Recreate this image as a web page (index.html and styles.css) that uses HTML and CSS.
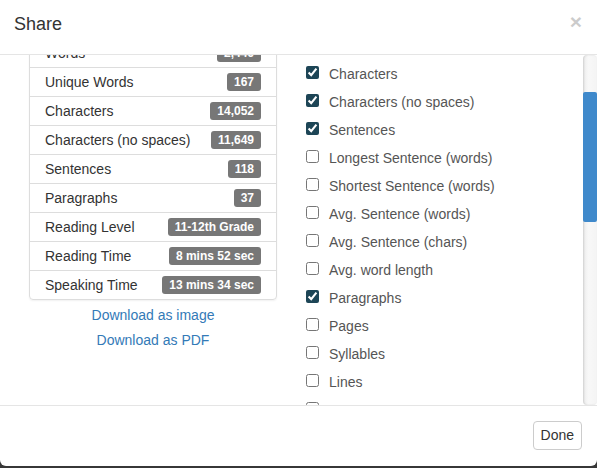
FILE: index.html
```html
<!DOCTYPE html>
<html>
<head>
<meta charset="utf-8">
<link rel="stylesheet" href="styles.css">
</head>
<body>
<div class="modal">
  <div class="modal-header">
    <h4 class="modal-title">Share</h4>
    <span class="close">×</span>
  </div>
  <div class="modal-body">
    <div class="viewport">
      <div class="row">
        <div class="col">
          <ul class="list-group">
            <li class="list-item"><span>Words</span><span class="badge">2,446</span></li>
            <li class="list-item"><span>Unique Words</span><span class="badge">167</span></li>
            <li class="list-item"><span>Characters</span><span class="badge">14,052</span></li>
            <li class="list-item"><span>Characters (no spaces)</span><span class="badge">11,649</span></li>
            <li class="list-item"><span>Sentences</span><span class="badge">118</span></li>
            <li class="list-item"><span>Paragraphs</span><span class="badge">37</span></li>
            <li class="list-item"><span>Reading Level</span><span class="badge">11-12th Grade</span></li>
            <li class="list-item"><span>Reading Time</span><span class="badge">8 mins 52 sec</span></li>
            <li class="list-item"><span>Speaking Time</span><span class="badge">13 mins 34 sec</span></li>
          </ul>
          <div class="links">
            <a class="link">Download as image</a>
            <a class="link">Download as PDF</a>
          </div>
        </div>
        <div class="col col-checks">
          <label class="check"><input type="checkbox" checked>Characters</label>
          <label class="check"><input type="checkbox" checked>Characters (no spaces)</label>
          <label class="check"><input type="checkbox" checked>Sentences</label>
          <label class="check"><input type="checkbox">Longest Sentence (words)</label>
          <label class="check"><input type="checkbox">Shortest Sentence (words)</label>
          <label class="check"><input type="checkbox">Avg. Sentence (words)</label>
          <label class="check"><input type="checkbox">Avg. Sentence (chars)</label>
          <label class="check"><input type="checkbox">Avg. word length</label>
          <label class="check"><input type="checkbox" checked>Paragraphs</label>
          <label class="check"><input type="checkbox">Pages</label>
          <label class="check"><input type="checkbox">Syllables</label>
          <label class="check"><input type="checkbox">Lines</label>
          <label class="check"><input type="checkbox"></label>
        </div>
      </div>
    </div>
    <div class="scrollbar"><div class="thumb"></div></div>
  </div>
  <div class="modal-footer">
    <button class="btn">Done</button>
  </div>
</div>
</body>
</html>
```
FILE: styles.css
```css
html, body {
  margin: 0;
  padding: 0;
}
body {
  background: #373737;
  font-family: "Liberation Sans", Arial, sans-serif;
  font-size: 14px;
  line-height: 20px;
  color: #333;
  width: 597px;
  height: 468px;
  overflow: hidden;
}
.modal {
  background: #fff;
  height: 466px;
  border-radius: 0 0 6px 6px;
  display: flex;
  flex-direction: column;
}
.modal-header {
  display: flex;
  justify-content: space-between;
  align-items: flex-start;
  padding: 11px 14px 17px 14px;
  border-bottom: 1px solid #e5e5e5;
  height: 26px;
}
.modal-title {
  margin: 0;
  font-size: 18px;
  font-weight: normal;
  line-height: 26px;
  color: #333;
}
.close {
  font-size: 21px;
  font-weight: bold;
  line-height: 21px;
  color: #000;
  opacity: 0.2;
  margin-top: 0;
  margin-right: 1px;
}
.modal-body {
  display: flex;
  height: 350px;
}
.viewport {
  flex: 1;
  overflow: hidden;
}
.row {
  display: flex;
  padding: 0 14px;
  margin-top: -17px;
}
.col {
  flex: 1;
  padding: 0 15px;
  min-width: 0;
}
.list-group {
  list-style: none;
  margin: 0;
  padding: 0;
  border: 1px solid #ddd;
  border-radius: 4px;
  box-shadow: 0 1px 2px rgba(0, 0, 0, 0.06);
}
.list-item {
  display: flex;
  justify-content: space-between;
  align-items: center;
  padding: 4px 15px;
  height: 20px;
  border-top: 1px solid #ddd;
}
.list-item:first-child {
  border-top: none;
}
.badge {
  background: #777;
  color: #fff;
  font-size: 12px;
  font-weight: bold;
  line-height: 12px;
  padding: 3px 7px;
  border-radius: 3px;
  white-space: nowrap;
}
.links {
  margin-top: 3px;
  display: flex;
  flex-direction: column;
  align-items: center;
}
.link {
  color: #337ab7;
  line-height: 25px;
}
.col-checks {
  display: flex;
  flex-direction: column;
  gap: 8px;
  padding-top: 26px;
  padding-left: 14px;
}
.check {
  display: flex;
  align-items: flex-start;
  color: #555;
  line-height: 20px;
  height: 20px;
}
.check input {
  width: 13px;
  height: 13px;
  margin: 2px 10px 0 0;
  accent-color: #1d4556;
}
.scrollbar {
  width: 14px;
  background: linear-gradient(to right, #ececec, #f8f8f8 40%, #f4f4f4);
  box-shadow: inset 1px 0 2px rgba(0, 0, 0, 0.12);
  border-radius: 4px;
}
.thumb {
  margin-top: 37px;
  height: 130px;
  background: #3f89cb;
  border-radius: 2px;
}
.modal-footer {
  border-top: 1px solid #e5e5e5;
  display: flex;
  justify-content: flex-end;
  padding: 15px 15px 16px;
}
.btn {
  font-family: "Liberation Sans", Arial, sans-serif;
  font-size: 14px;
  line-height: 19px;
  padding: 4px 7px;
  color: #333;
  background: #fff;
  border: 1px solid #ccc;
  border-radius: 4px;
}
```
